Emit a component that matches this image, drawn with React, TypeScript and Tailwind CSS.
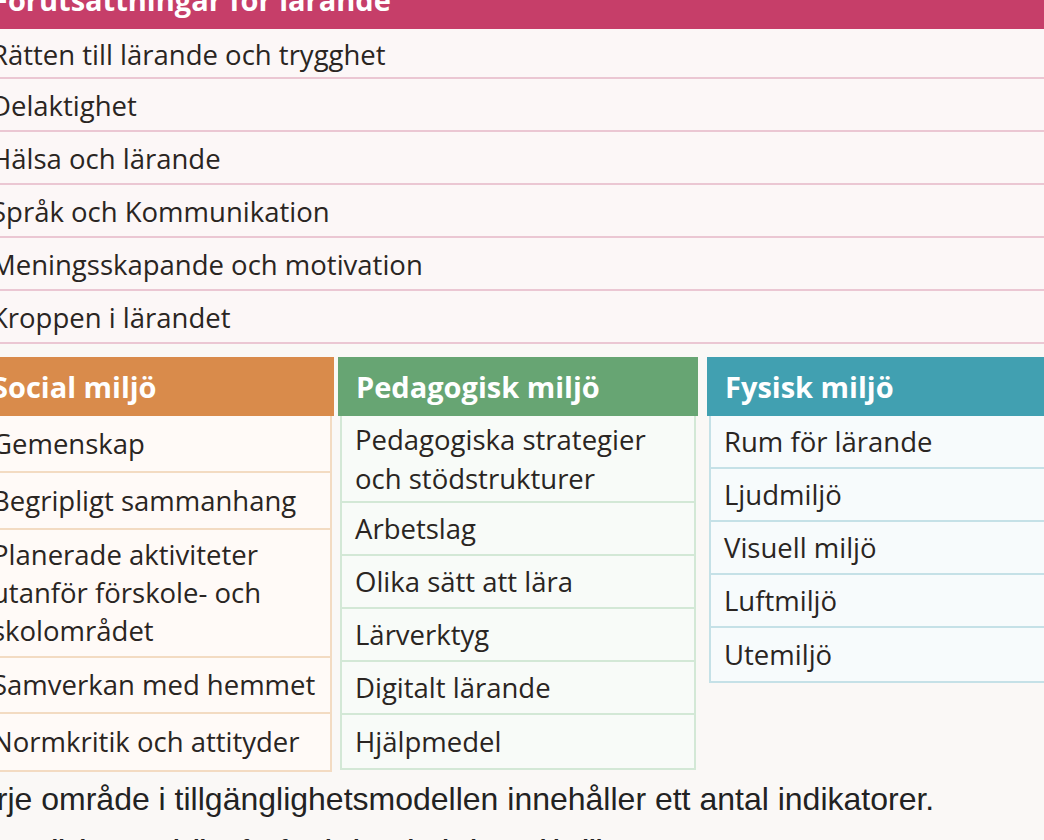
const conditions = [
  "Rätten till lärande och trygghet",
  "Delaktighet",
  "Hälsa och lärande",
  "Språk och Kommunikation",
  "Meningsskapande och motivation",
  "Kroppen i lärandet",
];

const social = [
  { text: "Gemenskap", h: "h-[57px]" },
  { text: "Begripligt sammanhang", h: "h-[57px]" },
  { text: "Planerade aktiviteter utanför förskole- och skolområdet", h: "h-[128px]" },
  { text: "Samverkan med hemmet", h: "h-[56px]" },
  { text: "Normkritik och attityder", h: "h-[56px]" },
];

const pedagogic = [
  { text: "Pedagogiska strategier och stödstrukturer", h: "h-[87px]" },
  { text: "Arbetslag", h: "h-[53px]" },
  { text: "Olika sätt att lära", h: "h-[53px]" },
  { text: "Lärverktyg", h: "h-[53px]" },
  { text: "Digitalt lärande", h: "h-[53px]" },
  { text: "Hjälpmedel", h: "h-[53px]" },
];

const physical = ["Rum för lärande", "Ljudmiljö", "Visuell miljö", "Luftmiljö", "Utemiljö"];

export default function App() {
  return (
    <div className="w-[1044px] h-[840px] overflow-hidden bg-[#faf8f6] text-[#2a2522] font-['Open_Sans',sans-serif]">
      <div className="-mt-[30px] -ml-[24px] w-[1100px]">
        {/* Förutsättningar */}
        <div className="h-[59px] bg-[#c63e69] text-white font-bold text-[29px] pl-[16px] flex items-center">
          Förutsättningar för lärande
        </div>
        <div className="bg-[#fcf7f7]">
          {conditions.map((c, i) => (
            <div
              key={c}
              className={`${i === 0 ? "h-[50px]" : "h-[53px]"} flex items-center pl-[15px] pt-[3px] text-[27.5px] border-b-2 border-[#ebc7d3]`}
            >
              {c}
            </div>
          ))}
        </div>

        {/* Miljöer */}
        <div className="flex items-start mt-[13px]">
          <div className="w-[358px]">
            <div className="h-[59px] bg-[#d98b4b] text-white font-bold text-[29px] pl-[16px] flex items-center">
              Social miljö
            </div>
            <div className="mr-[2px] bg-[#fffaf7] border-r-2 border-b-2 border-[#f3dbc2]">
              {social.map((r, i) => (
                <div
                  key={r.text}
                  className={`${r.h} flex items-center pl-[16px] text-[27.5px] leading-[38px] ${
                    i < social.length - 1 ? "border-b-2 border-[#f3dbc2]" : ""
                  }`}
                >
                  {r.text}
                </div>
              ))}
            </div>
          </div>

          <div className="w-[360px] ml-[4px]">
            <div className="h-[59px] bg-[#67a573] text-white font-bold text-[29px] pl-[18px] flex items-center">
              Pedagogisk miljö
            </div>
            <div className="mx-[2px] bg-[#f8fbf8] border-x-2 border-b-2 border-[#d3e8d6]">
              {pedagogic.map((r, i) => (
                <div
                  key={r.text}
                  className={`${r.h} flex items-center pl-[13px] pr-2 text-[27.5px] leading-[39px] ${
                    i < pedagogic.length - 1 ? "border-b-2 border-[#d3e8d6]" : ""
                  }`}
                >
                  {r.text}
                </div>
              ))}
            </div>
          </div>

          <div className="w-[360px] ml-[9px]">
            <div className="h-[59px] bg-[#41a0b1] text-white font-bold text-[29px] pl-[18px] flex items-center">
              Fysisk miljö
            </div>
            <div className="ml-[2px] bg-[#f7fbfc] border-l-2 border-b-2 border-[#c5e1e7]">
              {physical.map((t, i) => (
                <div
                  key={t}
                  className={`h-[53px] flex items-center pl-[13px] text-[27.5px] ${
                    i < physical.length - 1 ? "border-b-2 border-[#c5e1e7]" : ""
                  }`}
                >
                  {t}
                </div>
              ))}
            </div>
          </div>
        </div>

        <p className="mt-[8px] -ml-[16px] text-[32px] leading-[38px] text-[#222] font-['Liberation_Sans',Arial,sans-serif]">
          Varje område i tillgänglighetsmodellen innehåller ett antal indikatorer.
        </p>
        <p className="mt-[16px] -ml-[16px] text-[24px] leading-[30px] font-bold text-[#222] font-['Liberation_Sans',Arial,sans-serif]">
          Tillgänglighetsmodellen för förskola och skola med indikatorer
        </p>
      </div>
    </div>
  );
}
